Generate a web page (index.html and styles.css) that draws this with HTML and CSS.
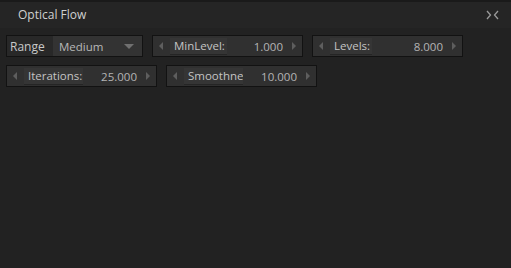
FILE: index.html
```html
<!DOCTYPE html>
<html lang="en">
<head>
  <meta charset="UTF-8">
  <title>Optical Flow</title>
  <link rel="stylesheet" href="styles.css">
</head>
<body>
  <div id="panel">
    <div id="panel-header">
      <span class="panel-title">Optical Flow</span>
      <svg class="collapse-icon" width="13" height="10" viewBox="0 0 13 10">
        <path d="M1 1 L4.5 5 L1 9 M12 1 L8.5 5 L12 9" fill="none" stroke="#9a9a9a" stroke-width="1.3"/>
      </svg>
    </div>
    <div id="panel-body">
      <div class="row">
        <div class="combo">
          <span class="combo-label">Range</span>
          <div class="combo-select">
            <span>Medium</span>
            <span class="combo-arrow"></span>
          </div>
        </div>
        <div class="spinner">
          <span class="arrow left"></span>
          <span class="spin-label">MinLevel:</span>
          <span class="spin-value">1.000</span>
          <span class="arrow right"></span>
        </div>
        <div class="spinner">
          <span class="arrow left"></span>
          <span class="spin-label">Levels:</span>
          <span class="spin-value">8.000</span>
          <span class="arrow right"></span>
        </div>
      </div>
      <div class="row">
        <div class="spinner">
          <span class="arrow left"></span>
          <span class="spin-label">Iterations:</span>
          <span class="spin-value">25.000</span>
          <span class="arrow right"></span>
        </div>
        <div class="spinner">
          <span class="arrow left"></span>
          <span class="spin-label">Smoothness:</span>
          <span class="spin-value">10.000</span>
          <span class="arrow right"></span>
        </div>
      </div>
    </div>
  </div>
</body>
</html>
```

FILE: styles.css
```css
body {
  margin: 0;
  background-color: #222222;
  font-family: 'Open Sans', 'Noto Sans', sans-serif;
  font-size: 12px;
  color: #c4c4c4;
}
#panel {
  width: 511px;
  height: 268px;
  display: flex;
  flex-direction: column;
}
#panel-header {
  height: 28px;
  border-top: 2px solid #1a1a1a;
  box-sizing: border-box;
  background-color: #252525;
  display: flex;
  align-items: center;
  justify-content: space-between;
  padding: 0 12px 0 18px;
}
.panel-title {
  font-size: 12px;
  color: #d0d0d0;
  margin-top: -2px;
}
.collapse-icon {
  margin-top: -1px;
}
#panel-body {
  padding: 7px 6px;
  display: flex;
  flex-direction: column;
  gap: 8px;
}
.row {
  display: flex;
  gap: 9px;
}
.combo {
  width: 137px;
  height: 22px;
  box-sizing: border-box;
  border: 1px solid #121212;
  display: flex;
}
.combo-label {
  width: 46px;
  display: flex;
  align-items: center;
  padding-left: 3px;
  box-sizing: border-box;
  background-color: #282828;
  color: #c8c8c8;
  font-size: 12px;
}
.combo-select {
  flex-grow: 1;
  background-color: #333333;
  display: flex;
  align-items: center;
  justify-content: space-between;
  padding: 0 8px 0 6px;
  color: #b8b8b8;
  font-size: 11.5px;
}
.combo-arrow {
  width: 0;
  height: 0;
  border-left: 5px solid transparent;
  border-right: 5px solid transparent;
  border-top: 5px solid #707070;
}
.spinner {
  width: 151px;
  height: 22px;
  box-sizing: border-box;
  border: 1px solid #121212;
  background-color: #303030;
  display: flex;
  align-items: center;
  padding: 0 6px 0 6px;
}
.arrow {
  width: 0;
  height: 0;
  flex-shrink: 0;
  border-top: 4px solid transparent;
  border-bottom: 4px solid transparent;
}
.arrow.left {
  border-right: 4px solid #5e5e5e;
  margin-right: 6px;
}
.arrow.right {
  border-left: 4px solid #5e5e5e;
  margin-left: 9px;
}
.spin-label {
  max-width: 59px;
  height: 17px;
  box-sizing: border-box;
  padding: 0 2px 0 4px;
  margin-left: 1px;
  background-color: #353535;
  border-bottom: 1px solid #252525;
  overflow: hidden;
  white-space: nowrap;
  line-height: 16px;
  font-size: 11.5px;
  color: #c4c4c4;
}
.spin-value {
  flex-grow: 1;
  text-align: right;
  font-size: 11.5px;
  color: #b4b4b4;
}
```
